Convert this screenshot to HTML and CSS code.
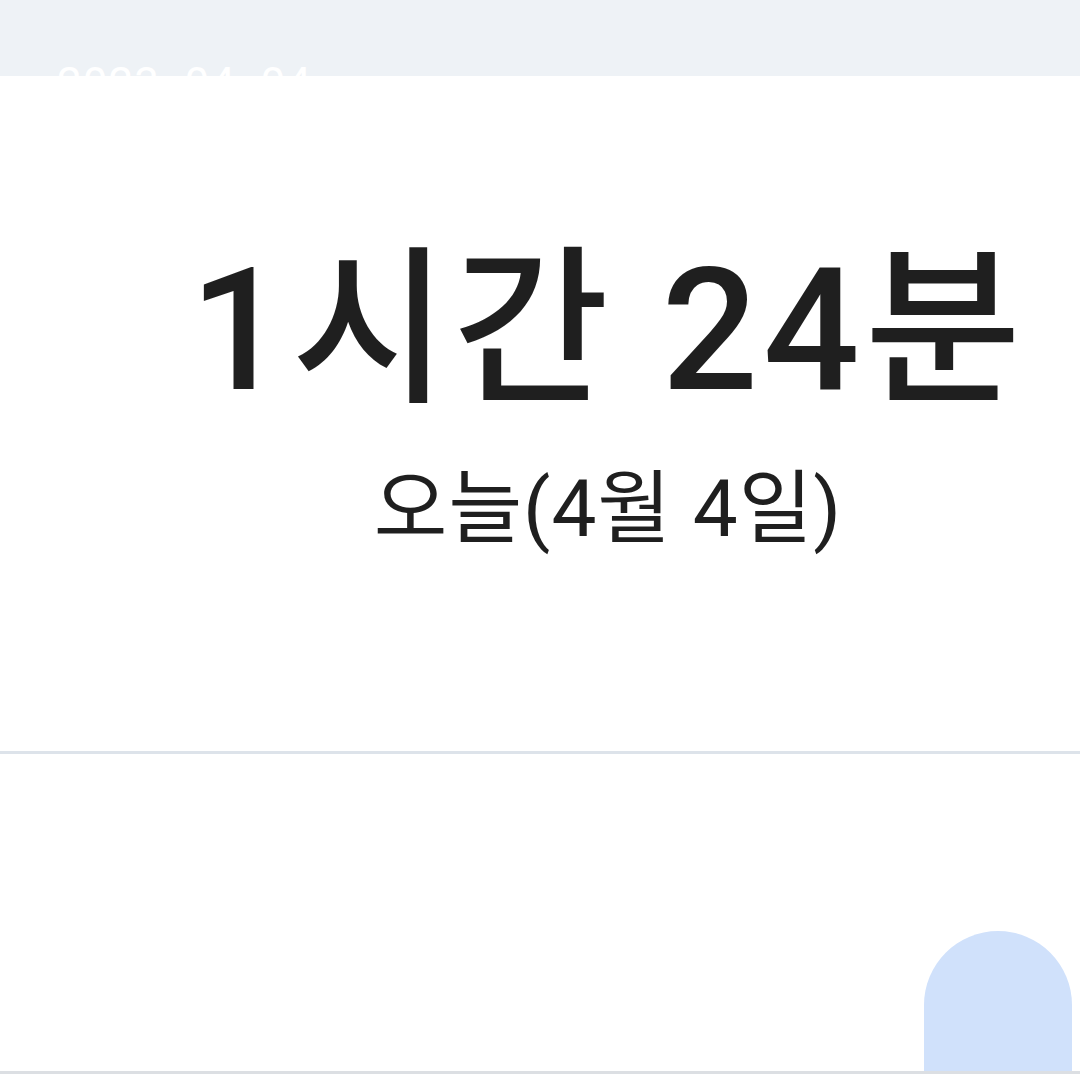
FILE: index.html
```html
<!DOCTYPE html>
<html lang="ko">
<head>
  <meta charset="UTF-8">
  <meta name="viewport" content="width=device-width, initial-scale=1.0">
  <title>사용 시간</title>
  <link rel="stylesheet" href="styles.css">
</head>
<body>
  <!-- 상단 바 -->
  <div class="topbar">
    <span class="date">2023. 04. 04</span>
  </div>

  <!-- 오늘 사용 시간 -->
  <div class="summary">
    <h1 class="total">1시간 24분</h1>
    <p class="day">오늘(4월 4일)</p>
  </div>

  <!-- 차트 -->
  <div class="chart">
    <div class="bar"></div>
  </div>
</body>
</html>
```

FILE: styles.css
```css
body {
  margin: 0;
  background-color: #ffffff;
  font-family: Roboto, "Noto Sans CJK KR", sans-serif;
  color: #1f1f1f;
  overflow: hidden;
}

.topbar {
  height: 76px;
  background-color: #eef2f6;
  position: relative;
}

/* 날짜는 상단 바 경계에 걸쳐 있음 */
.date {
  position: absolute;
  left: 57px;
  top: 62px;
  font-size: 44px;
  line-height: 44px;
  letter-spacing: 1px;
  color: #ffffff;
}

.summary {
  height: 678px;
  border-bottom: 3px solid #dde3ea;
  text-align: center;
  padding-left: 136px;
  box-sizing: border-box;
  padding-top: 155px;
}

.total {
  margin: 0;
  font-size: 170px;
  font-weight: 500;
  line-height: 200px;
  letter-spacing: 5px;
}

.day {
  margin: 28px 0 0;
  font-size: 80px;
  font-weight: 400;
  line-height: 100px;
  letter-spacing: 1px;
}

.chart {
  height: 317px;
  border-bottom: 3px solid #dcdfe3;
  display: flex;
  justify-content: flex-end;
  align-items: flex-end;
  padding-right: 8px;
}

.bar {
  width: 148px;
  height: 140px;
  background-color: #d0e1fb;
  border-radius: 74px 74px 0 0;
}
```
